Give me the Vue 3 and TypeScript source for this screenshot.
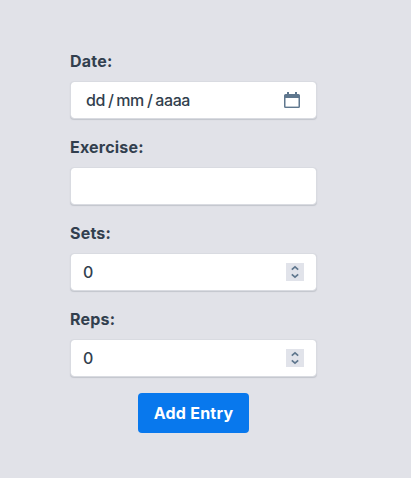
<script setup lang="ts">
import { ref } from 'vue'

const exercise = ref<string>('')
const sets = ref<number>(0)
const reps = ref<number>(0)
const dateParts: string[] = ['dd', '/', 'mm', '/', 'aaaa']
</script>

<template>
  <form class="entry-form" @submit.prevent>
    <div class="field">
      <label class="label">Date:</label>
      <div class="control date">
        <div class="date-text">
          <span v-for="(part, i) in dateParts" :key="i">{{ part }}</span>
        </div>
        <svg class="calendar" width="16" height="16" viewBox="0 0 16 16">
          <path d="M3 0h2v2h6V0h2v2h1.5Q16 2 16 3.5v11Q16 16 14.5 16h-13Q0 16 0 14.5v-11Q0 2 1.5 2H3z" fill="#5f778e" />
          <path d="M1.5 6h13v8.6h-13z" fill="#fff" />
        </svg>
      </div>
    </div>
    <div class="field">
      <label class="label" for="exercise">Exercise:</label>
      <div class="control">
        <input id="exercise" v-model="exercise" class="input" type="text" />
      </div>
    </div>
    <div class="field">
      <label class="label" for="sets">Sets:</label>
      <div class="control">
        <input id="sets" v-model="sets" class="input" type="text" inputmode="numeric" />
        <span class="stepper">
          <svg width="18" height="18" viewBox="0 0 18 18">
            <path d="M5.8 6.6 9 3.8l3.2 2.8M5.8 11.4 9 14.2l3.2-2.8" />
          </svg>
        </span>
      </div>
    </div>
    <div class="field">
      <label class="label" for="reps">Reps:</label>
      <div class="control">
        <input id="reps" v-model="reps" class="input" type="text" inputmode="numeric" />
        <span class="stepper">
          <svg width="18" height="18" viewBox="0 0 18 18">
            <path d="M5.8 6.6 9 3.8l3.2 2.8M5.8 11.4 9 14.2l3.2-2.8" />
          </svg>
        </span>
      </div>
    </div>
    <button class="submit" type="submit">Add Entry</button>
  </form>
</template>

<style>
body {
  background: #e1e2e8;
}
</style>

<style scoped>
.entry-form {
  display: flex;
  flex-direction: column;
  width: 247px;
  padding: 49px 0 0 70px;
  font-family: Inter, "Liberation Sans", sans-serif;
  font-size: 16px;
  line-height: 24px;
  color: #323f4e;
}
.field {
  display: flex;
  flex-direction: column;
  gap: 8px;
  height: 86px;
}
.label {
  font-weight: 700;
  letter-spacing: 0.2px;
}
.control {
  display: flex;
  align-items: center;
  box-sizing: border-box;
  height: 38px;
  padding: 0 12px;
  border: 1px solid #d9dbe1;
  border-radius: 4px;
  background: #fff;
  background-clip: padding-box;
  box-shadow: 0 1px 1px #c3c6cd;
}
.date {
  justify-content: space-between;
  padding: 0 16px 0 15px;
}
.date-text {
  display: flex;
  gap: 3px;
  font-weight: 500;
  letter-spacing: -0.45px;
}
.calendar {
  display: block;
}
.input {
  flex: 1;
  min-width: 0;
  padding: 0;
  border: 0;
  outline: 0;
  background: transparent;
  color: inherit;
  font: inherit;
  font-weight: 500;
}
.stepper {
  display: flex;
  width: 18px;
  height: 18px;
  background: #e1e3ea;
}
.stepper path {
  fill: none;
  stroke: #5f778e;
  stroke-width: 1.7;
}
.submit {
  align-self: center;
  width: 111px;
  height: 40px;
  padding: 0;
  border: 0;
  border-radius: 4px;
  background: #0878ed;
  color: #fff;
  font: inherit;
  font-weight: 700;
  letter-spacing: 0.25px;
}
</style>
